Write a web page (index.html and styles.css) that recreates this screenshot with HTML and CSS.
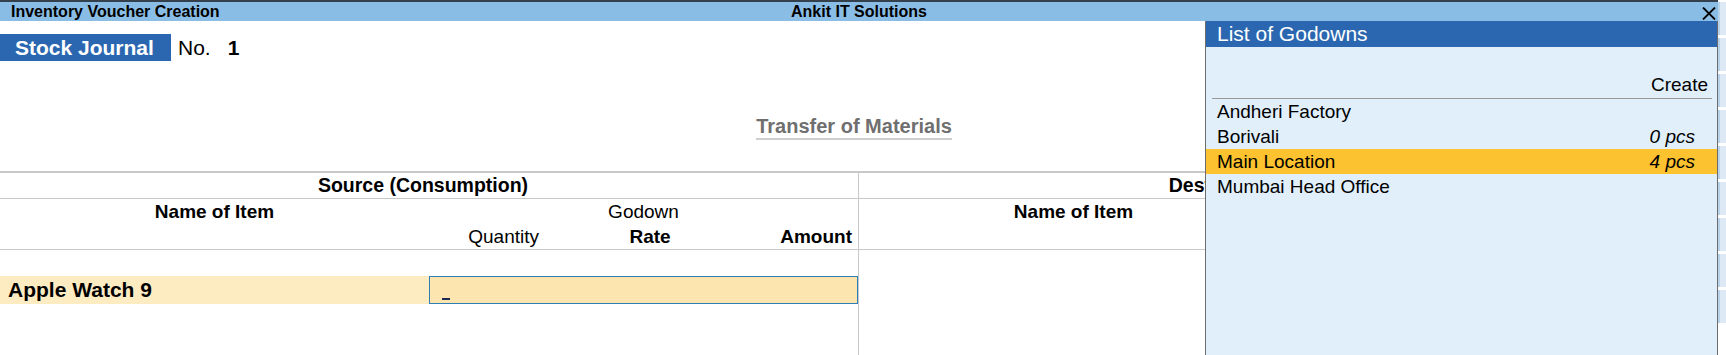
FILE: index.html
```html
<!DOCTYPE html>
<html lang="en">
<head>
    <meta charset="UTF-8">
    <title>Inventory Voucher Creation</title>
    <link rel="stylesheet" href="styles.css">
</head>
<body>
    <div class="app">
        <div class="screen">
            <div class="titlebar">
                <span class="tb-left">Inventory Voucher Creation</span>
                <span class="tb-center">Ankit IT Solutions</span>
                <span class="tb-right">
                    <svg class="close-icon" width="14" height="13" viewBox="0 0 14 13">
                        <path d="M1 0.5 L13 12.5 M13 0.5 L1 12.5" stroke="#000" stroke-width="1.8" fill="none"/>
                    </svg>
                </span>
            </div>

            <div class="vhead">
                <div class="vrow">
                    <span class="vtype">Stock Journal</span>
                    <span class="vno-label">No.</span>
                    <span class="vno">1</span>
                </div>
                <div class="vtitle-wrap">
                    <span class="vtitle">Transfer of Materials</span>
                </div>
            </div>

            <div class="grid">
                <div class="half">
                    <div class="h-source">Source (Consumption)</div>
                    <div class="colhead">
                        <div class="ch-name">Name of Item</div>
                        <div class="ch-right">
                            <div class="ch-godown">Godown</div>
                            <div class="ch-sub">
                                <span class="c-qty">Quantity</span>
                                <span class="c-rate">Rate</span>
                                <span class="c-amt">Amount</span>
                            </div>
                        </div>
                    </div>
                    <div class="gap-row"></div>
                    <div class="item-row">
                        <div class="item-name">Apple Watch 9</div>
                        <div class="item-input"><span class="cursor"></span></div>
                    </div>
                </div>
                <div class="half half-right">
                    <div class="h-source"><span class="h-clip">Destination (Production)</span></div>
                    <div class="colhead">
                        <div class="ch-name">Name of Item</div>
                        <div class="ch-right">
                            <div class="ch-godown">Godown</div>
                            <div class="ch-sub">
                                <span class="c-qty">Quantity</span>
                                <span class="c-rate">Rate</span>
                                <span class="c-amt">Amount</span>
                            </div>
                        </div>
                    </div>
                </div>
            </div>

            <!-- popup list over the voucher -->
            <div class="popup">
                <div class="popup-head">List of Godowns</div>
                <div class="popup-create"><span>Create</span></div>
                <div class="popup-list">
                    <div class="pl-row"><span>Andheri Factory</span><span class="pl-qty"></span></div>
                    <div class="pl-row"><span>Borivali</span><span class="pl-qty">0 pcs</span></div>
                    <div class="pl-row selected"><span>Main Location</span><span class="pl-qty">4 pcs</span></div>
                    <div class="pl-row"><span>Mumbai Head Office</span><span class="pl-qty"></span></div>
                </div>
            </div>
        </div>
        <div class="btnbar">
            <div class="btn"></div>
            <div class="btn"></div>
            <div class="btn"></div>
            <div class="btn"></div>
            <div class="btn"></div>
            <div class="btn"></div>
            <div class="btn"></div>
            <div class="btn"></div>
            <div class="btn"></div>
        </div>
    </div>
</body>
</html>
```

FILE: styles.css
```css
body {
    margin: 0;
    font-family: "Liberation Sans", Arial, sans-serif;
    background: #fff;
    color: #000;
    overflow: hidden;
}
.app {
    display: flex;
    width: 1726px;
    height: 355px;
}
.screen {
    width: 1718px;
    position: relative;
    display: flex;
    flex-direction: column;
}
.titlebar {
    height: 19px;
    border-top: 2px solid #34414c;
    background: #8abde5;
    display: grid;
    grid-template-columns: 1fr auto 1fr;
    align-items: center;
    font-size: 16px;
    font-weight: bold;
}
.tb-left {
    padding-left: 11px;
}
.tb-right {
    display: flex;
    justify-content: flex-end;
    padding-right: 2px;
}
.close-icon {
    display: block;
    margin-top: 3px;
}
.vhead {
    height: 150px;
    padding-top: 13px;
    box-sizing: border-box;
}
.vrow {
    display: flex;
    align-items: center;
    height: 27px;
    font-size: 21px;
}
.vtype {
    background: #2a67b0;
    color: #fff;
    font-weight: bold;
    height: 27px;
    line-height: 27px;
    padding: 0 15px 0 15px;
    width: 141px;
}
.vno-label {
    margin-left: 7px;
}
.vno {
    margin-left: 17px;
    font-weight: bold;
}
.vtitle-wrap {
    margin-top: 54px;
    text-align: center;
    padding-right: 10px;
}
.vtitle {
    display: inline-block;
    font-size: 20px;
    font-weight: bold;
    color: #6f6f6f;
    line-height: 23px;
    border-bottom: 2px solid #cfcfcf;
}
.grid {
    display: grid;
    grid-template-columns: 858px 860px;
    border-top: 2px solid #c8c8c8;
    flex: 1;
}
.half-right {
    border-left: 1px solid #c8c8c8;
}
.h-source {
    height: 25px;
    line-height: 25px;
    text-align: center;
    font-weight: bold;
    font-size: 19.5px;
    border-bottom: 1px solid #c8c8c8;
    padding-right: 12px;
}
.colhead {
    display: grid;
    grid-template-columns: 429px 429px;
    height: 50px;
    font-size: 19px;
    border-bottom: 1px solid #c8c8c8;
}
.ch-name {
    text-align: center;
    font-weight: bold;
    line-height: 25px;
}
.ch-godown {
    text-align: center;
    line-height: 25px;
}
.ch-sub {
    display: grid;
    grid-template-columns: 116px 210px 103px;
    line-height: 25px;
}
.c-qty {
    text-align: right;
    padding-right: 6px;
}
.c-rate {
    text-align: center;
    font-weight: bold;
}
.c-amt {
    text-align: right;
    font-weight: bold;
    padding-right: 6px;
}
.gap-row {
    height: 26px;
}
.item-row {
    display: grid;
    grid-template-columns: 429px 429px;
    height: 28px;
}
.item-name {
    background: #fdebc2;
    font-size: 21px;
    font-weight: bold;
    line-height: 28px;
    padding-left: 8px;
}
.item-input {
    background: #fde5b0;
    border: 1px solid #2e7db5;
    position: relative;
}
.cursor {
    position: absolute;
    left: 12px;
    bottom: 3px;
    width: 8px;
    height: 2px;
    background: #1a2a50;
}
.popup {
    position: absolute;
    left: 1205px;
    top: 21px;
    width: 513px;
    bottom: 0;
    box-sizing: border-box;
    background: #e1effb;
    border-left: 1px solid #6c6c6c;
    border-right: 1px solid #6c6c6c;
    font-size: 19px;
}
.popup-head {
    background: #2a67b0;
    color: #fff;
    font-size: 21px;
    height: 26px;
    line-height: 26px;
    padding-left: 11px;
}
.popup-create {
    height: 51px;
    margin: 0 5px 0 6px;
    border-bottom: 1px solid #9a9a9a;
    display: flex;
    justify-content: flex-end;
    align-items: flex-end;
    padding-right: 4px;
    line-height: 26px;
}
.pl-row {
    display: flex;
    justify-content: space-between;
    height: 25px;
    line-height: 25px;
    padding: 0 22px 0 11px;
}
.pl-row.selected {
    background: #fdc22f;
}
.pl-qty {
    font-style: italic;
}
.btnbar {
    flex: 1;
    background: #fff;
    display: flex;
    flex-direction: column;
    gap: 3px;
    padding-top: 2px;
}
.btn {
    height: 33px;
    background: #dde9f4;
    border-left: 2px solid #b9d3ea;
}
```
